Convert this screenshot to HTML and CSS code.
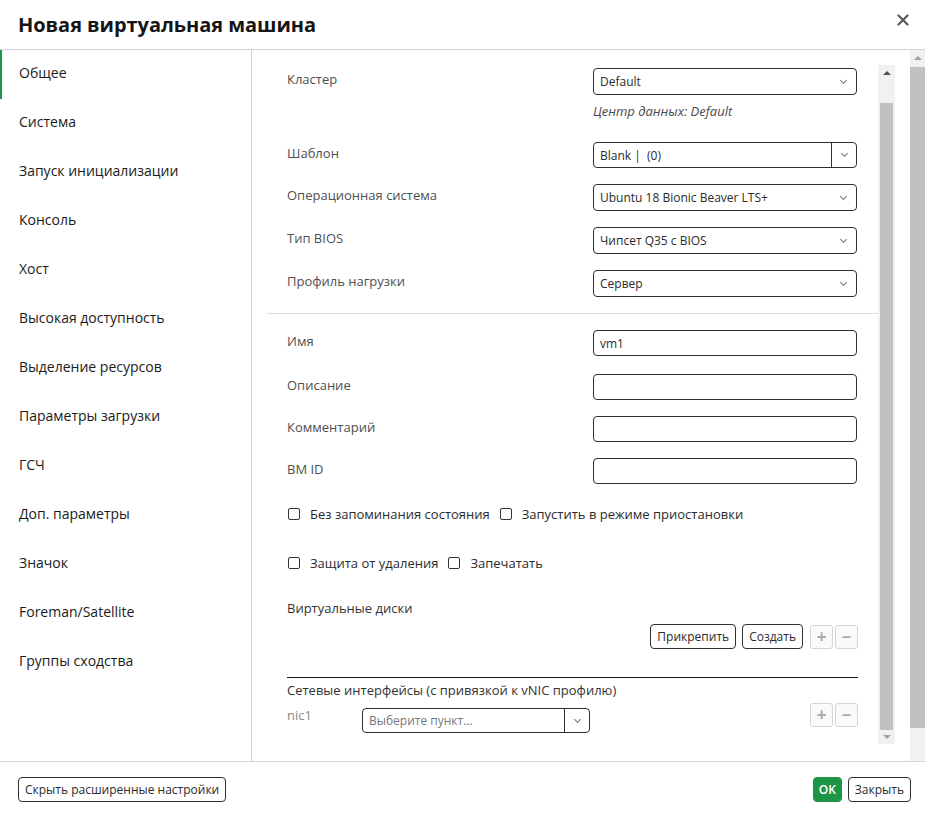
FILE: index.html
```html
<!DOCTYPE html>
<html lang="ru">
<head>
  <meta charset="UTF-8">
  <title>Новая виртуальная машина</title>
  <link rel="stylesheet" href="styles.css">
</head>
<body>
  <div class="modal">
    <div class="modal-header">
      <h1>Новая виртуальная машина</h1>
      <button class="close" aria-label="Закрыть">
        <svg width="12" height="12" viewBox="0 0 12 12"><path d="M1.5 1.5 L10.5 10.5 M10.5 1.5 L1.5 10.5" stroke="#5a5a5a" stroke-width="2.2" stroke-linecap="round"/></svg>
      </button>
    </div>

    <div class="modal-body">
      <ul class="sidebar">
        <li class="active">Общее</li>
        <li>Система</li>
        <li>Запуск инициализации</li>
        <li>Консоль</li>
        <li>Хост</li>
        <li>Высокая доступность</li>
        <li>Выделение ресурсов</li>
        <li>Параметры загрузки</li>
        <li>ГСЧ</li>
        <li>Доп. параметры</li>
        <li>Значок</li>
        <li>Foreman/Satellite</li>
        <li>Группы сходства</li>
      </ul>

      <div class="content">
        <div class="pane">
          <div class="section">
            <div class="row first">
              <label>Кластер</label>
              <div class="field">
                <div class="select"><span>Default</span><i class="chev"></i></div>
                <div class="help">Центр данных: Default</div>
              </div>
            </div>
            <div class="row">
              <label>Шаблон</label>
              <div class="select split"><span>Blank |&nbsp; (0)</span><i class="chev"></i></div>
            </div>
            <div class="row">
              <label>Операционная система</label>
              <div class="select"><span>Ubuntu 18 Bionic Beaver LTS+</span><i class="chev"></i></div>
            </div>
            <div class="row">
              <label>Тип BIOS</label>
              <div class="select"><span>Чипсет Q35 с BIOS</span><i class="chev"></i></div>
            </div>
            <div class="row">
              <label>Профиль нагрузки</label>
              <div class="select"><span>Сервер</span><i class="chev"></i></div>
            </div>
          </div>

          <hr class="divider">

          <div class="section">
            <div class="row tight name-row">
              <label>Имя</label>
              <div class="input">vm1</div>
            </div>
            <div class="row tight">
              <label>Описание</label>
              <div class="input"></div>
            </div>
            <div class="row tight">
              <label>Комментарий</label>
              <div class="input"></div>
            </div>
            <div class="row tight">
              <label>ВМ ID</label>
              <div class="input"></div>
            </div>

            <div class="checks">
              <span class="check"><i class="box"></i>Без запоминания состояния</span>
              <span class="check"><i class="box"></i>Запустить в режиме приостановки</span>
            </div>
            <div class="checks">
              <span class="check"><i class="box"></i>Защита от удаления</span>
              <span class="check"><i class="box"></i>Запечатать</span>
            </div>

            <div class="disks-title">Виртуальные диски</div>
            <div class="disk-actions">
              <button class="btn">Прикрепить</button>
              <button class="btn">Создать</button>
              <div class="pm">
                <button class="pm-btn">+</button>
                <button class="pm-btn">&minus;</button>
              </div>
            </div>

            <div class="nics">
              <div class="nics-title">Сетевые интерфейсы (с привязкой к vNIC профилю)</div>
              <div class="nic-row">
                <span class="nic-name">nic1</span>
                <div class="select split nic-select"><span class="placeholder">Выберите пункт...</span><i class="chev"></i></div>
                <div class="pm">
                  <button class="pm-btn">+</button>
                  <button class="pm-btn">&minus;</button>
                </div>
              </div>
            </div>
          </div>
        </div>

        <div class="scrollbar inner">
          <span class="arrow up"></span>
          <span class="thumb"></span>
          <span class="arrow down"></span>
        </div>
        <div class="scrollbar outer">
          <span class="arrow up"></span>
          <span class="thumb"></span>
        </div>
      </div>
    </div>

    <div class="modal-footer">
      <button class="btn">Скрыть расширенные настройки</button>
      <div class="footer-right">
        <button class="btn primary">OK</button>
        <button class="btn">Закрыть</button>
      </div>
    </div>
  </div>
</body>
</html>
```

FILE: styles.css
```css
/* Global styles */
* {
  margin: 0;
  padding: 0;
  box-sizing: border-box;
}

body {
  font-family: 'Open Sans', 'Noto Sans', sans-serif;
  font-size: 13px;
  color: #151515;
  background: #fff;
}

button {
  font-family: inherit;
  background: none;
  border: none;
  cursor: pointer;
}

.modal {
  width: 925px;
  height: 815px;
  display: flex;
  flex-direction: column;
}

/* Header */
.modal-header {
  height: 50px;
  display: flex;
  align-items: center;
  justify-content: space-between;
  padding: 0 16px 0 18px;
  border-bottom: 1px solid #d2d2e0;
}

.modal-header h1 {
  font-size: 20px;
  font-weight: 700;
  color: #151515;
  letter-spacing: -0.05px;
}

.close {
  display: flex;
  margin-top: -10px;
}

/* Body */
.modal-body {
  flex: 1;
  display: flex;
  min-height: 0;
}

.sidebar {
  list-style: none;
  width: 252px;
  border-right: 1px solid #d1d1d1;
}

.sidebar li {
  height: 49px;
  padding: 13px 0 0 19px;
  font-size: 14px;
  color: #1b1b1b;
}

.sidebar li.active {
  border-left: 2px solid #1e9447;
  padding-left: 17px;
}

.content {
  flex: 1;
  display: flex;
}

.pane {
  flex: 1;
  padding: 18px 0 0 15px;
}

.section {
  padding: 0 20px;
}

.row {
  display: flex;
  margin-bottom: 16px;
}

.row label {
  width: 306px;
  color: #4f4f4f;
  padding-top: 2px;
  flex-shrink: 0;
}

.row.first {
  margin-bottom: 22px;
}

.field {
  width: 264px;
}

.select,
.input {
  width: 264px;
  height: 27px;
  border: 1px solid #2f2f2f;
  border-radius: 4px;
  display: flex;
  align-items: center;
  padding: 0 6px;
  font-size: 12px;
  color: #2b2b2b;
}

.select span {
  flex: 1;
}

.chev {
  width: 25px;
  height: 100%;
  display: flex;
  align-items: center;
  justify-content: center;
  margin-right: -6px;
}

.chev::before {
  content: "";
  width: 4px;
  height: 4px;
  border-right: 1px solid #777;
  border-bottom: 1px solid #777;
  transform: rotate(45deg);
  margin-top: -3px;
}

.split {
  height: 26px;
}

.split .chev {
  border-left: 1px solid #2f2f2f;
}

.help {
  font-style: italic;
  color: #4a4a4a;
  margin-top: 7px;
}

.divider {
  border: none;
  border-top: 1px solid #dcdcdc;
  margin: 0 0 16px 0;
}

.row.tight {
  margin-bottom: 16px;
}

.row.name-row {
  margin-bottom: 18px;
}

.input {
  height: 26px;
}

/* Checkboxes */
.checks {
  display: flex;
  gap: 10px;
  color: #2b2b2b;
  margin: 21px 0 31px 1px;
}

.checks + .checks {
  margin-top: 0;
}

.check {
  display: flex;
  align-items: center;
}

.box {
  width: 12px;
  height: 12px;
  border: 1px solid #333;
  border-radius: 2px;
  margin-right: 10px;
}

.disks-title {
  color: #333;
  margin-top: -4px;
}

.disk-actions {
  display: flex;
  justify-content: flex-end;
  align-items: center;
  margin-top: 7px;
}

.btn {
  height: 25px;
  padding: 0 6px;
  border: 1px solid #2f2f2f;
  border-radius: 4px;
  font-size: 12px;
  color: #2b2b2b;
  margin-left: 6px;
}

.pm {
  display: flex;
  gap: 2px;
  margin-left: 7px;
}

.pm-btn {
  width: 23px;
  height: 24px;
  border: 1px solid #d4d4d4;
  border-radius: 3px;
  background: #fafafa;
  color: #aaa;
  font-size: 17px;
  font-weight: 700;
  line-height: 20px;
}

.nics {
  border-top: 1px solid #151515;
  margin-top: 28px;
  padding-top: 3px;
}

.nics-title {
  color: #333;
}

.nic-row {
  display: flex;
  align-items: flex-start;
  margin-top: 1px;
}

.nic-name {
  width: 75px;
  color: #8a8a8a;
  padding-top: 6px;
}

.nic-select {
  width: 228px;
  height: 25px;
  margin-top: 8px;
}

.placeholder {
  color: #777;
}

.nic-row .pm {
  margin-left: auto;
  margin-top: 3px;
}

/* Scrollbars */
.scrollbar {
  display: flex;
  flex-direction: column;
  align-items: center;
  background: #f1f1f1;
}

.scrollbar.inner {
  width: 17px;
  margin: 15px 15px 17px 0;
}

.scrollbar.outer {
  width: 15px;
}

.thumb {
  background: #c1c1c1;
  width: 100%;
}

.inner .thumb {
  flex: 1;
  margin-top: 28px;
  width: 13px;
}

.outer .thumb {
  height: 661px;
  margin-top: 7px;
}

.arrow {
  width: 0;
  height: 0;
  border-left: 4px solid transparent;
  border-right: 4px solid transparent;
}

.arrow.up {
  border-bottom: 4px solid #505050;
  margin-top: 6px;
}

.outer .arrow.up {
  border-bottom-color: #a3a3a3;
}

.arrow.down {
  border-top: 4px solid #a3a3a3;
  margin: 5px 0 5px;
}

/* Footer */
.modal-footer {
  height: 54px;
  border-top: 1px solid #d6d6d6;
  display: flex;
  align-items: center;
  justify-content: space-between;
  padding: 1px 14px 0 18px;
}

.modal-footer > .btn {
  margin-left: 0;
}

.footer-right {
  display: flex;
}

.btn.primary {
  background: #1e9447;
  border-color: #1e9447;
  color: #fff;
  font-weight: 600;
  padding: 0 5px;
}
```
